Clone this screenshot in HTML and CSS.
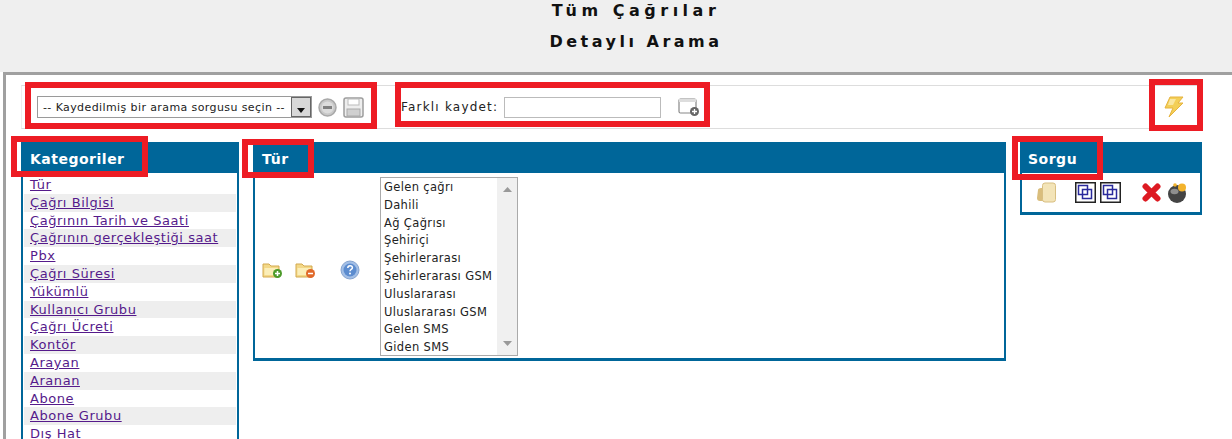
FILE: index.html
```html
<!DOCTYPE html>
<html lang="tr">
<head>
<meta charset="utf-8">
<title>Tüm Çağrılar</title>
<link rel="stylesheet" href="styles.css">
</head>
<body>
<header class="page-head">
  <h1>Tüm Çağrılar</h1>
  <h2>Detaylı Arama</h2>
</header>
<main class="frame">
  <div class="toolbar">
    <div class="saved">
      <div class="select"><span class="select-text">-- Kaydedilmiş bir arama sorgusu seçin --</span><span class="select-btn"><svg width="8" height="5" viewBox="0 0 8 5"><path d="M0 0h8L4 5z" fill="#111"/></svg></span></div>
      <svg class="ic-minus" width="19" height="19" viewBox="0 0 19 19"><circle cx="9.500" cy="9.500" r="8.500" fill="#c8c8c8" stroke="#a8a8a8" stroke-width="1.500"/><circle cx="9.500" cy="9.500" r="6" fill="#dcdcdc"/><rect x="5" y="8" width="9" height="3" fill="#808080"/></svg>
      <svg class="ic-save" width="21" height="21" viewBox="0 0 21 21"><rect x="1" y="1" width="19" height="19" rx="2" fill="#eee" stroke="#9d9d9d" stroke-width="1.500"/><rect x="5" y="2" width="11" height="6" fill="#fff" stroke="#bbb"/><rect x="4" y="12" width="13" height="7" fill="#d0d0d0" stroke="#aaa"/></svg>
    </div>
    <div class="save-as">
      <label class="save-label" for="farkli">Farklı kaydet:</label>
      <input id="farkli" class="save-input" type="text">
      <svg class="ic-new" width="22" height="20" viewBox="0 0 22 20"><rect x="1" y="2" width="17" height="14" rx="1.500" fill="#fff" stroke="#888" stroke-width="1.200"/><rect x="1" y="2" width="17" height="3" fill="#ddd"/><circle cx="16.500" cy="14.500" r="4.500" fill="#666"/><path d="M14 14.500h5M16.500 12v5" stroke="#fff" stroke-width="1.300"/></svg>
    </div>
    <svg class="ic-bolt" width="20" height="22" viewBox="0 0 20 22"><path d="M6 1h13l-5 6h5L5 21l4-9H1z" fill="#f3cf57" stroke="#e6b33e" stroke-width="1"/><path d="M6 3h6l-3 6H4z" fill="#f9e6a0"/></svg>
  </div>

  <div class="columns">
    <section class="panel">
      <h3 class="panel-title">Kategoriler</h3>
      <ul class="cat-list">
        <li><a href="#">Tür</a></li>
        <li><a href="#">Çağrı Bilgisi</a></li>
        <li><a href="#">Çağrının Tarih ve Saati</a></li>
        <li><a href="#">Çağrının gerçekleştiği saat</a></li>
        <li><a href="#">Pbx</a></li>
        <li><a href="#">Çağrı Süresi</a></li>
        <li><a href="#">Yükümlü</a></li>
        <li><a href="#">Kullanıcı Grubu</a></li>
        <li><a href="#">Çağrı Ücreti</a></li>
        <li><a href="#">Kontör</a></li>
        <li><a href="#">Arayan</a></li>
        <li><a href="#">Aranan</a></li>
        <li><a href="#">Abone</a></li>
        <li><a href="#">Abone Grubu</a></li>
        <li><a href="#">Dış Hat</a></li>
      </ul>
    </section>

    <section class="panel panel-short">
      <h3 class="panel-title">Tür</h3>
      <div class="tur-body">
        <div class="tur-icons">
          <svg width="21" height="18" viewBox="0 0 21 18"><path d="M1 3h6l2 2h8v11H1z" fill="#f3d888" stroke="#d3a94f"/><rect x="2.500" y="7" width="13" height="7" fill="#fbeeb8"/><circle cx="15.500" cy="12.500" r="4.500" fill="#4c9a2a"/><path d="M13 12.500h5M15.500 10v5" stroke="#fff" stroke-width="1.500"/></svg>
          <svg width="21" height="18" viewBox="0 0 21 18"><path d="M1 3h6l2 2h8v11H1z" fill="#f3d888" stroke="#d3a94f"/><rect x="2.500" y="7" width="13" height="7" fill="#fbeeb8"/><circle cx="15.500" cy="12.500" r="4.500" fill="#e0692a"/><path d="M13 12.500h5" stroke="#fff" stroke-width="1.500"/></svg>
          <svg class="ic-help" width="20" height="20" viewBox="0 0 20 20"><circle cx="10" cy="10" r="9" fill="#a3bfe6" stroke="#86a4d0"/><circle cx="10" cy="10" r="6.500" fill="#5c8ccf"/><path d="M7.800 8c0-3 4.600-3 4.600-.3 0 1.800-2.400 1.700-2.400 3.500" fill="none" stroke="#fff" stroke-width="1.500"/><circle cx="10" cy="13.600" r="1" fill="#fff"/></svg>
        </div>
        <div class="listbox">
          <ul class="list-items">
            <li>Gelen çağrı</li>
            <li>Dahili</li>
            <li>Ağ Çağrısı</li>
            <li>Şehiriçi</li>
            <li>Şehirlerarası</li>
            <li>Şehirlerarası GSM</li>
            <li>Uluslararası</li>
            <li>Uluslararası GSM</li>
            <li>Gelen SMS</li>
            <li>Giden SMS</li>
          </ul>
          <div class="scroll">
            <svg width="9" height="5" viewBox="0 0 9 5"><path d="M0 5h9L4.500 0z" fill="#999"/></svg>
            <svg width="9" height="5" viewBox="0 0 9 5"><path d="M0 0h9L4.500 5z" fill="#999"/></svg>
          </div>
        </div>
      </div>
    </section>

    <section class="panel panel-min">
      <h3 class="panel-title panel-title-tight">Sorgu</h3>
      <div class="sorgu-body">
        <svg class="ic-pages" width="21" height="21" viewBox="0 0 21 21"><path d="M2 8c0-1 1-2 3-2h3v13H4c-2 0-3-1-3-3z" fill="#d9bd7c"/><rect x="6.500" y="1" width="13" height="19" rx="2.500" fill="#f3e4b8" stroke="#d8bf82"/></svg>
        <svg class="ic-copy" width="21" height="21" viewBox="0 0 21 21"><rect x=".75" y=".75" width="19.500" height="19.500" fill="#fff" stroke="#222" stroke-width="1.500"/><rect x="3.500" y="3.500" width="9" height="9" fill="none" stroke="#2a2a9c" stroke-width="1.500"/><rect x="7.500" y="7.500" width="9" height="9" fill="none" stroke="#2a2a9c" stroke-width="1.500"/></svg>
        <svg class="ic-copy2" width="21" height="21" viewBox="0 0 21 21"><rect x=".75" y=".75" width="19.500" height="19.500" fill="#fff" stroke="#222" stroke-width="1.500"/><rect x="3.500" y="3.500" width="9" height="9" fill="none" stroke="#2a2a9c" stroke-width="1.500"/><rect x="7.500" y="7.500" width="9" height="9" fill="none" stroke="#2a2a9c" stroke-width="1.500"/></svg>
        <svg class="ic-x" width="19" height="19" viewBox="0 0 19 19"><path d="M3.500 3.500l12 12M15.500 3.500l-12 12" stroke="#dd1a22" stroke-width="6" stroke-linecap="round"/></svg>
        <svg class="ic-bomb" width="19" height="20" viewBox="0 0 19 20"><circle cx="9" cy="11" r="9" fill="#444"/><ellipse cx="6.500" cy="8.500" rx="4" ry="2.800" fill="#8f8f8f"/><circle cx="14" cy="4.500" r="4" fill="#f3b32c"/><circle cx="7" cy="2" r="1.800" fill="#f3b32c"/></svg>
      </div>
    </section>
  </div>
</main>

<div class="mark mark-a"></div>
<div class="mark mark-b"></div>
<div class="mark mark-c"></div>
<div class="mark mark-d"></div>
<div class="mark mark-e"></div>
<div class="mark mark-f"></div>
</body>
</html>
```
FILE: styles.css
```css
html, body {
  margin: 0;
  height: 439px;
  overflow: hidden;
}
body {
  position: relative;
  background: #fff;
  font-family: "DejaVu Sans", Verdana, sans-serif;
  color: #222;
}
svg { display: block; flex: none; }
ul { list-style: none; margin: 0; padding: 0; }

.page-head {
  background: #efefef;
  height: 72px;
  padding: 1px 0 0 40px;
  box-sizing: border-box;
  text-align: center;
  color: #111;
  overflow: hidden;
}
.page-head h1, .page-head h2 {
  margin: 0;
  font-size: 16px;
  font-weight: bold;
  line-height: 20px;
}
.page-head h1 { letter-spacing: 4.500px; }
.page-head h2 { margin-top: 11px; letter-spacing: 3.500px; }

.frame {
  margin-left: 3px;
  border-top: 3px solid #a0a0a0;
  border-left: 3px solid #a0a0a0;
  padding: 10px 0 0 15px;
  height: 367px;
  box-sizing: border-box;
  width: 1229px;
  background: #fff;
  overflow: hidden;
}

.toolbar {
  width: 1181px;
  height: 44px;
  box-sizing: border-box;
  border-top: 1px solid #ddd;
  border-bottom: 1px solid #ddd;
  border-left: 1px solid #eee;
  padding-left: 15px;
  display: flex;
  align-items: center;
}
.saved { display: flex; align-items: center; width: 364px; }
.select {
  width: 275px;
  height: 22px;
  box-sizing: border-box;
  border: 1px solid #9a9a9a;
  display: flex;
  align-items: center;
  justify-content: space-between;
  font-size: 11px;
  letter-spacing: .4px;
  padding-left: 5px;
  color: #222;
}
.select-text { white-space: nowrap; }
.select-btn {
  width: 20px;
  height: 20px;
  box-sizing: border-box;
  background: #d8d8d8;
  border: 1px solid #666;
  display: flex;
  align-items: flex-end;
  justify-content: center;
  padding-bottom: 3px;
}
.ic-minus { margin-left: 6px; }
.ic-save { margin-left: 6px; }

.save-as { display: flex; align-items: center; }
.save-label { font-size: 12px; letter-spacing: 1.200px; white-space: nowrap; color: #222; }
.save-input {
  width: 157px;
  height: 21px;
  box-sizing: border-box;
  margin: 0 0 0 6px;
  border: 1px solid #bbb;
  padding: 0;
  background: #fff;
}
.ic-new { margin-left: 17px; }
.ic-bolt { margin-left: auto; margin-right: 18px; }

.columns {
  display: grid;
  grid-template-columns: 218px 753px 182px;
  gap: 14px;
  margin-top: 13px;
  align-items: start;
}
.panel {
  box-sizing: border-box;
  border: 2px solid #006699;
  border-top: 0;
}
.panel-title {
  margin: 0 -2px;
  background: #006699;
  color: #fff;
  font-size: 14px;
  font-weight: bold;
  height: 31px;
  line-height: 34px;
  padding-left: 9px;
  letter-spacing: .5px;
}
.panel-title-tight { padding-left: 8px; }
.panel-short { height: 219px; border-bottom-width: 3px; }
.panel-min { height: 73px; border-bottom-width: 3px; }

.cat-list { padding: 3px 1px 0; }
.cat-list li {
  height: 17.800px;
  line-height: 17.800px;
  padding-left: 6px;
  font-size: 13px;
  letter-spacing: .55px;
  white-space: nowrap;
}
.cat-list li:nth-child(even) { background: #eee; }
.cat-list a { color: #551a8b; text-decoration: underline; }

.tur-body {
  display: flex;
  align-items: center;
  padding: 4px 0 0 7px;
}
.tur-icons { display: flex; align-items: center; gap: 12px; margin-top: 6px; }
.ic-help { margin-left: 12px; }
.listbox {
  margin-left: 20px;
  width: 138px;
  height: 179px;
  box-sizing: border-box;
  border: 1px solid #aaa;
  display: flex;
}
.list-items {
  flex: 1;
  padding: 1px 0 0 3px;
  font-size: 11.500px;
  letter-spacing: .35px;
  line-height: 17.800px;
  color: #222;
  white-space: nowrap;
}
.scroll {
  width: 20px;
  background: #f0f0f0;
  display: flex;
  flex-direction: column;
  align-items: center;
  justify-content: space-between;
  padding: 9px 0;
  box-sizing: border-box;
}

.sorgu-body {
  display: flex;
  align-items: center;
  padding: 9px 0 0 14px;
}
.ic-copy { margin-left: 18px; }
.ic-copy2 { margin-left: 4px; }
.ic-x { margin-left: 21px; }
.ic-bomb { margin-left: 7px; }

.mark {
  position: absolute;
  box-sizing: border-box;
  border: 6px solid #ed1c24;
}
.mark-a { left: 25px; top: 82px; width: 352px; height: 47px; }
.mark-b { left: 395px; top: 82px; width: 315px; height: 45px; }
.mark-c { left: 1149px; top: 79px; width: 54px; height: 52px; }
.mark-d { left: 11px; top: 136px; width: 137px; height: 41px; }
.mark-e { left: 242px; top: 139px; width: 72px; height: 39px; }
.mark-f { left: 1012px; top: 136px; width: 91px; height: 44px; }
```
